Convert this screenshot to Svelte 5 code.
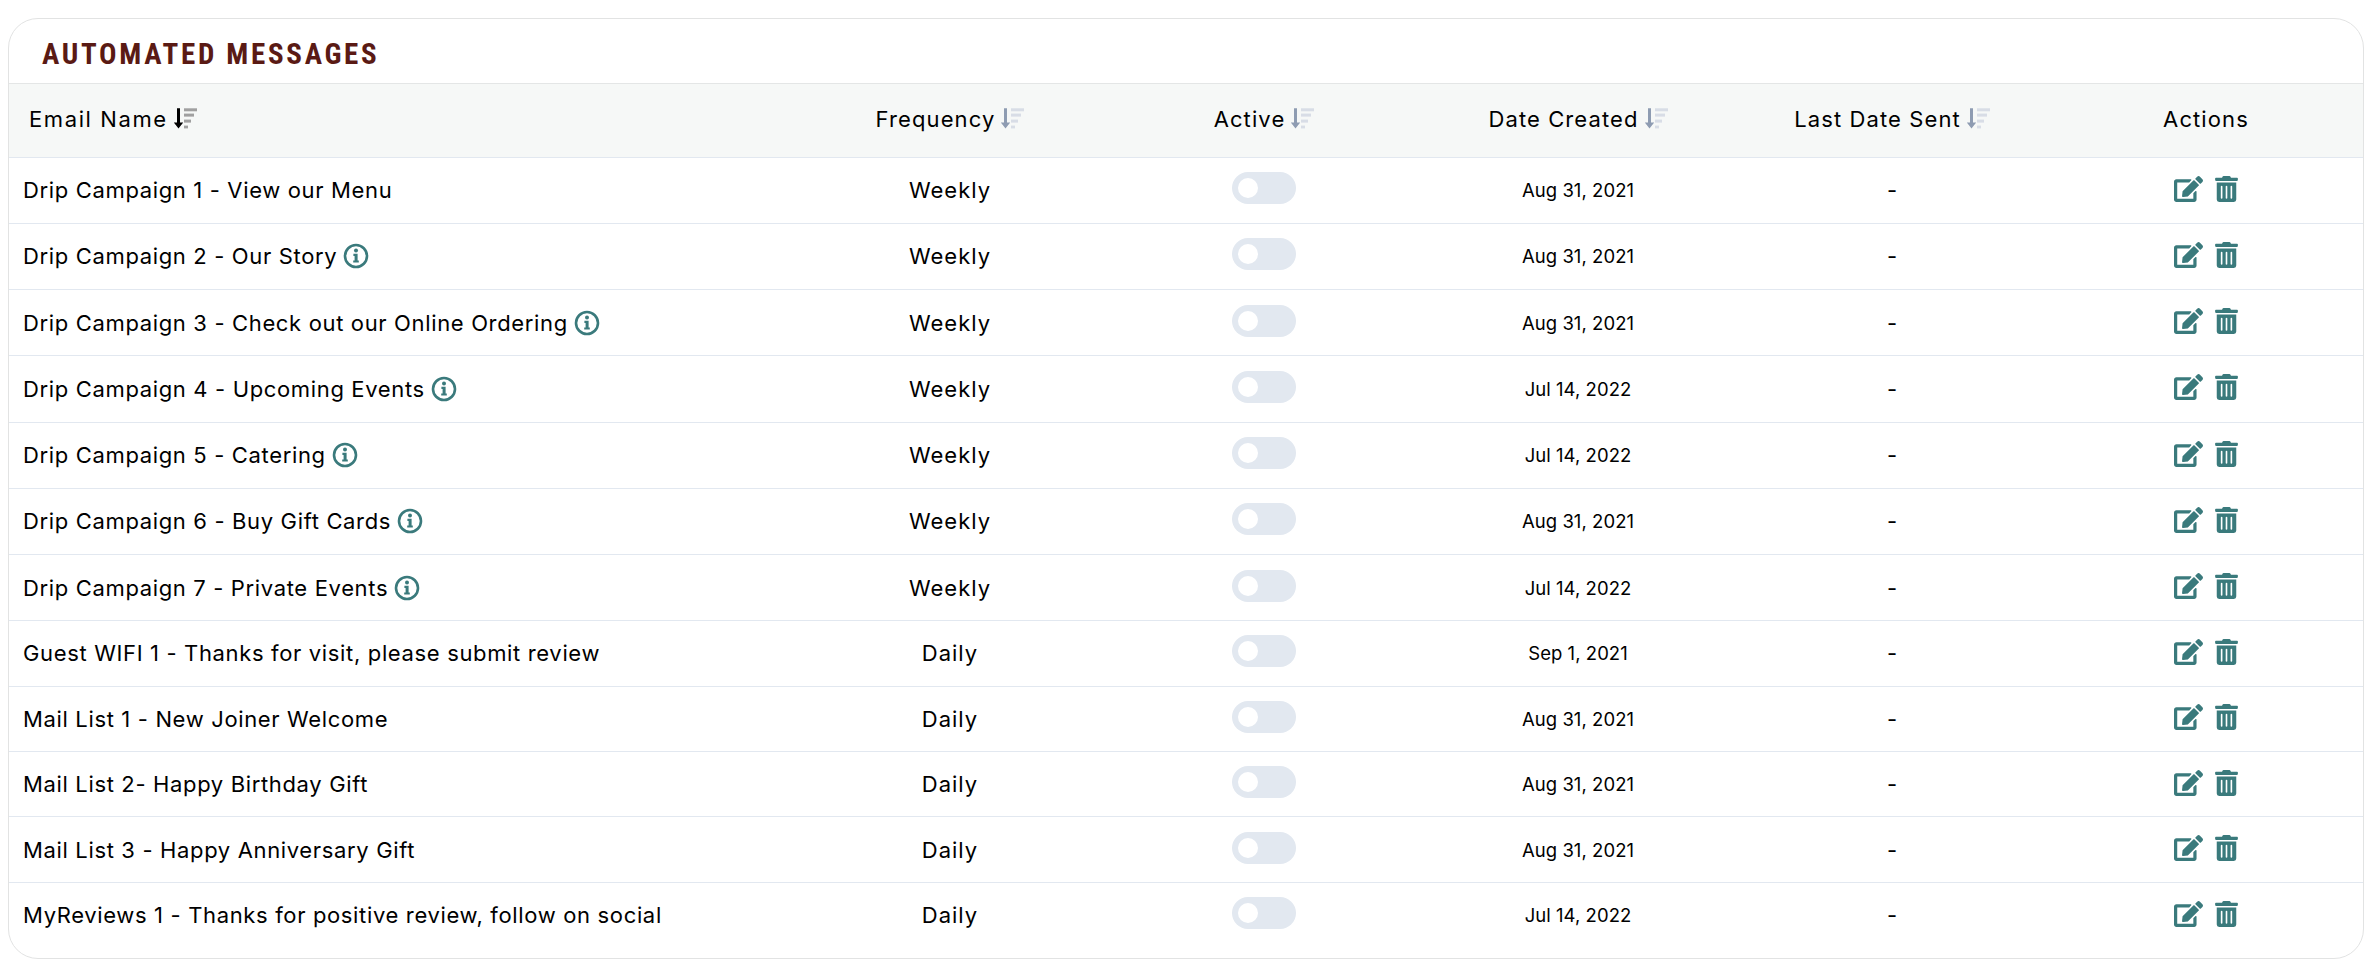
<script>
	const columns = ['Frequency', 'Active', 'Date Created', 'Last Date Sent'];

	const rows = [
		{ name: 'Drip Campaign 1 - View our Menu', freq: 'Weekly', date: 'Aug 31, 2021', info: false },
		{ name: 'Drip Campaign 2 - Our Story', freq: 'Weekly', date: 'Aug 31, 2021', info: true },
		{ name: 'Drip Campaign 3 - Check out our Online Ordering', freq: 'Weekly', date: 'Aug 31, 2021', info: true },
		{ name: 'Drip Campaign 4 - Upcoming Events', freq: 'Weekly', date: 'Jul 14, 2022', info: true },
		{ name: 'Drip Campaign 5 - Catering', freq: 'Weekly', date: 'Jul 14, 2022', info: true },
		{ name: 'Drip Campaign 6 - Buy Gift Cards', freq: 'Weekly', date: 'Aug 31, 2021', info: true },
		{ name: 'Drip Campaign 7 - Private Events', freq: 'Weekly', date: 'Jul 14, 2022', info: true },
		{ name: 'Guest WIFI 1 - Thanks for visit, please submit review', freq: 'Daily', date: 'Sep 1, 2021', info: false },
		{ name: 'Mail List 1 - New Joiner Welcome', freq: 'Daily', date: 'Aug 31, 2021', info: false },
		{ name: 'Mail List 2- Happy Birthday Gift', freq: 'Daily', date: 'Aug 31, 2021', info: false },
		{ name: 'Mail List 3 - Happy Anniversary Gift', freq: 'Daily', date: 'Aug 31, 2021', info: false },
		{ name: 'MyReviews 1 - Thanks for positive review, follow on social', freq: 'Daily', date: 'Jul 14, 2022', info: false }
	];
</script>

{#snippet sortIcon(active)}
	<svg class="sort" class:active width="23" height="21" viewBox="0 0 23 21" aria-hidden="true">
		<path class="arrow" d="M3 0.3h3v14.2h3.2l-4.7 6-4.7-6H3z" />
		<rect class="bar" x="10" y="0.3" width="13" height="3" />
		<rect class="bar" x="10" y="5.6" width="10" height="3" />
		<rect class="bar" x="10" y="11.6" width="7" height="3" />
		<rect class="bar" x="10" y="17.6" width="4" height="2.8" />
	</svg>
{/snippet}

<div class="card">
	<h2>Automated Messages</h2>
	<table>
		<thead>
			<tr>
				<th class="name-head">
					<span class="head-label">Email Name {@render sortIcon(true)}</span>
				</th>
				{#each columns as col}
					<th><span class="head-label">{col} {@render sortIcon(false)}</span></th>
				{/each}
				<th>Actions</th>
			</tr>
		</thead>
		<tbody>
			{#each rows as row, i}
				<tr class:short={i > 6}>
					<td class="name">
						<span class="name-wrap">
							{row.name}
							{#if row.info}
								<svg class="info" width="26" height="26" viewBox="0 0 26 26" aria-hidden="true">
									<circle cx="13" cy="13" r="11" fill="none" stroke-width="2.6" />
									<circle class="glyph" cx="13" cy="7.6" r="2" />
									<path class="glyph" d="M10.4 10.8h4.2v6.6h1.2v2.2h-5.6v-2.2h1.4v-4.4h-1.2z" />
								</svg>
							{/if}
						</span>
					</td>
					<td class="freq">{row.freq}</td>
					<td>
						<span class="toggle"><span class="knob"></span></span>
					</td>
					<td class="date">{row.date}</td>
					<td class="sent">-</td>
					<td>
						<span class="actions">
							<svg width="29" height="26" viewBox="0 0 576 512" aria-hidden="true">
								<path d="M402.6 83.2l90.2 90.2c3.8 3.8 3.8 10 0 13.8L274.4 405.6l-92.8 10.3c-12.4 1.4-22.9-9.1-21.5-21.5l10.3-92.8L388.8 83.2c3.8-3.8 10-3.8 13.8 0zm162-22.9l-48.8-48.8c-15.2-15.2-39.9-15.2-55.2 0l-35.4 35.4c-3.8 3.8-3.8 10 0 13.8l90.2 90.2c3.8 3.8 10 3.8 13.8 0l35.4-35.4c15.2-15.3 15.2-40 0-55.2zM384 346.2V448H64V128h229.8c3.2 0 6.2-1.3 8.5-3.5l40-40c7.6-7.6 2.2-20.5-8.5-20.5H48C21.5 64 0 85.5 0 112v352c0 26.5 21.5 48 48 48h352c26.5 0 48-21.5 48-48V306.2c0-10.7-12.9-16-20.5-8.5l-40 40c-2.2 2.3-3.5 5.3-3.5 8.5z" />
							</svg>
							<svg width="23" height="26" viewBox="0 0 448 512" aria-hidden="true">
								<path d="M32 464a48 48 0 0 0 48 48h288a48 48 0 0 0 48-48V128H32zm272-256a16 16 0 0 1 32 0v224a16 16 0 0 1-32 0zm-96 0a16 16 0 0 1 32 0v224a16 16 0 0 1-32 0zm-96 0a16 16 0 0 1 32 0v224a16 16 0 0 1-32 0zM432 32H312l-9.4-18.7A24 24 0 0 0 281.1 0H166.8a23.72 23.72 0 0 0-21.4 13.3L136 32H16A16 16 0 0 0 0 48v32a16 16 0 0 0 16 16h416a16 16 0 0 0 16-16V48a16 16 0 0 0-16-16z" />
							</svg>
						</span>
					</td>
				</tr>
			{/each}
		</tbody>
	</table>
</div>

<style>
	:global(body) {
		background: #fff;
	}

	.card {
		box-sizing: border-box;
		width: 2356px;
		height: 941px;
		margin: 18px 0 0 8px;
		border: 1.5px solid #e2e3e3;
		border-radius: 30px;
		overflow: hidden;
		font-family: Inter, 'Noto Sans', sans-serif;
		color: #000;
	}

	h2 {
		margin: 0;
		height: 64px;
		padding: 22px 0 0 33px;
		box-sizing: border-box;
		font-family: 'Roboto Condensed', 'Liberation Sans Narrow', Roboto, sans-serif;
		font-size: 29px;
		font-weight: 700;
		line-height: 26px;
		letter-spacing: 2.7px;
		text-transform: uppercase;
		color: #5a1a14;
	}

	table {
		width: 100%;
		table-layout: fixed;
		border-collapse: collapse;
	}

	th {
		width: 314px;
		height: 69.5px;
		padding: 0 0 3px;
		background: #f6f8f7;
		border-top: 1.5px solid #e4e6e6;
		border-bottom: 1.5px solid #e2e8f0;
		font-size: 22px;
		font-weight: 400;
		letter-spacing: 1.1px;
		text-align: center;
	}

	th.name-head {
		width: auto;
		padding-left: 20px;
		text-align: left;
		letter-spacing: 1.6px;
	}

	.head-label {
		display: inline-flex;
		align-items: center;
		gap: 6px;
	}

	.sort {
		fill: #8e9cb2;
	}

	.sort .bar {
		fill: #d8dde6;
	}

	.sort.active .arrow {
		fill: #000;
	}

	.sort.active .bar {
		fill: #a0a0a0;
	}

	td {
		height: 65.25px;
		padding: 0;
		border-bottom: 1.5px solid #e2e8f0;
		text-align: center;
		font-size: 22px;
		font-weight: 435;
		vertical-align: middle;
	}

	tr.short td {
		height: 64.4px;
	}

	tr:last-child td {
		border-bottom: 0;
	}

	td.name {
		padding-left: 14px;
		text-align: left;
		letter-spacing: 0.65px;
	}

	.name-wrap {
		display: inline-flex;
		align-items: center;
		gap: 6px;
	}

	.info {
		stroke: #3a7a7c;
	}

	.info .glyph {
		fill: #3a7a7c;
		stroke: none;
	}

	td.freq {
		letter-spacing: 1px;
	}

	td.date {
		font-size: 18.5px;
		letter-spacing: 0.05px;
	}

	td.sent {
		font-weight: 400;
	}

	.toggle {
		display: inline-block;
		position: relative;
		width: 64px;
		height: 32px;
		margin-bottom: 4px;
		border-radius: 16px;
		background: #e2e8f0;
		vertical-align: middle;
	}

	.knob {
		position: absolute;
		left: 6px;
		top: 6px;
		width: 20px;
		height: 20px;
		border-radius: 50%;
		background: #fff;
	}

	.actions {
		display: inline-flex;
		align-items: center;
		gap: 12px;
		margin-top: 2px;
	}

	.actions svg {
		fill: #3a7a7c;
	}
</style>
